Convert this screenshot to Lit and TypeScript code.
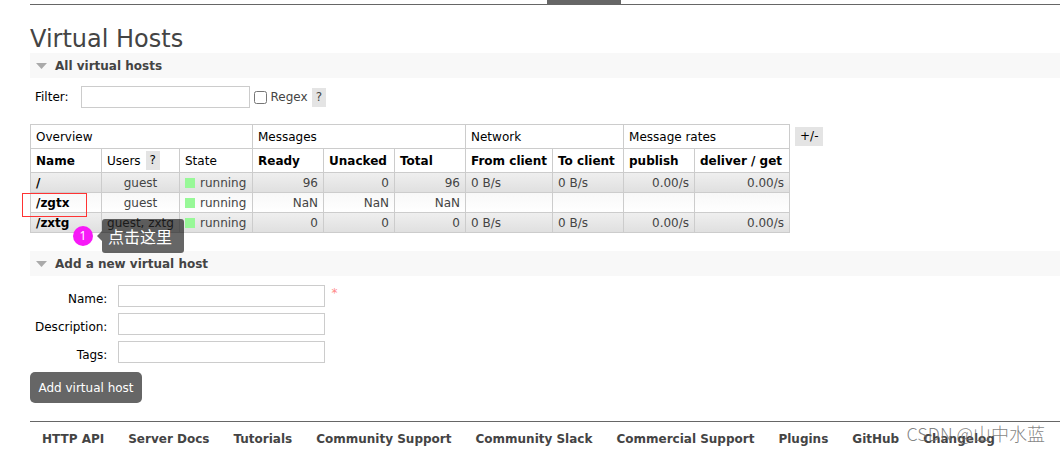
import { LitElement, html, css } from "lit";
import { customElement, state } from "lit/decorators.js";

interface VHost {
  name: string;
  users: string;
  state: string;
  messages: string[];
  network: string[];
  rates: string[];
}

const HOSTS: VHost[] = [
  { name: "/", users: "guest", state: "running", messages: ["96", "0", "96"], network: ["0 B/s", "0 B/s"], rates: ["0.00/s", "0.00/s"] },
  { name: "/zgtx", users: "guest", state: "running", messages: ["NaN", "NaN", "NaN"], network: ["", ""], rates: ["", ""] },
  { name: "/zxtg", users: "guest, zxtg", state: "running", messages: ["0", "0", "0"], network: ["0 B/s", "0 B/s"], rates: ["0.00/s", "0.00/s"] },
];

const LINKS = [
  "HTTP API", "Server Docs", "Tutorials", "Community Support", "Community Slack",
  "Commercial Support", "Plugins", "GitHub", "Changelog",
];

@customElement("app-root")
export class AppRoot extends LitElement {
  @state() private listOpen = true;
  @state() private formOpen = true;

  static styles = css`
    :host {
      display: block;
      position: relative;
      overflow: hidden;
      background: #fff;
      color: #444;
      font: 12px/16px Verdana, "DejaVu Sans", sans-serif;
    }
    * { box-sizing: border-box; }
    .page { padding-left: 30px; }
    .tabs { display: flex; height: 5px; border-bottom: 1px solid #666; }
    .tab-active { width: 74px; margin-left: 517px; background: #666; }
    h1 { margin: 20px 0 0; font-size: 24px; line-height: 28px; font-weight: 400; }
    h2 { margin: 0; font-size: 12px; }
    .toggle {
      display: flex; align-items: center; gap: 8px;
      width: 100%; height: 25px; padding: 0 6px;
      border: 0; background: #f8f8f8; color: #444;
      font: bold 12px/16px Verdana, "DejaVu Sans", sans-serif;
      cursor: pointer;
    }
    .arrow { width: 11px; height: 6px; }
    .filter { display: flex; align-items: center; padding: 8px 5px 16px; color: #000; }
    .filter .text { width: 169px; margin: 0 4px 0 12px; }
    .text { height: 22px; padding: 0 4px; border: 1px solid #ccc; font: inherit; outline: 0; }
    .regex { display: flex; align-items: center; gap: 4px; color: #444; }
    .regex input { width: 13px; height: 13px; margin: 0; }
    .chip {
      display: inline-block; height: 19px; padding: 0 4px;
      border: 0; background: #e4e4e4; color: #444;
      font: inherit; line-height: 19px; cursor: pointer;
    }
    .filter .chip { margin-left: 4px; }
    .head { display: flex; align-items: center; gap: 5px; }
    th .chip { color: #000; }
    .listing { display: flex; align-items: flex-start; gap: 5px; margin-bottom: 18px; }
    .listing > .chip { margin-top: 3px; padding: 0 5px; color: #000; }
    table { border-collapse: collapse; }
    th, td { padding: 0 5px; border: 1px solid #ccc; white-space: nowrap; }
    th { height: 24px; color: #000; font-weight: 400; text-align: left; }
    th.sort { font-weight: 700; }
    td { height: 20px; text-align: right; }
    tbody tr { background: linear-gradient(#efefef, #dfdfdf); }
    tbody tr:nth-child(even) { background: linear-gradient(#f8f8f8, #fff); }
    td.left { text-align: left; }
    td.center { text-align: center; }
    td a { color: #000; font-weight: 700; text-decoration: none; }
    .c-name { width: 71px; }
    .c-users { width: 78px; }
    .c-state { width: 73px; }
    .c-num { width: 71px; }
    .c-from { width: 87px; }
    .c-deliver { width: 95px; }
    .status { display: flex; align-items: center; gap: 5px; }
    .square { width: 10px; height: 10px; background: #98f898; }
    .form { display: grid; grid-template-columns: max-content 207px auto; column-gap: 11px; row-gap: 6px; padding: 9px 5px; color: #000; }
    .form label { padding-top: 6px; text-align: right; }
    .form .text { grid-column: 2; }
    .required { margin-left: -5px; color: #f88; }
    .submit {
      display: block; min-width: 112px; height: 31px; padding: 0 8px; border: 0; border-radius: 5px;
      background: #666; color: #fff; font: inherit; cursor: pointer;
    }
    footer { display: flex; margin-top: 18px; padding: 9px 0 5px; border-top: 1px solid #666; }
    footer a { padding: 0 12px; color: #444; font-weight: 700; text-decoration: none; white-space: nowrap; }
    .mark { position: absolute; top: 193px; left: 22px; width: 65px; height: 24px; border: 1px solid #f33; }
    .step {
      position: absolute; top: 226px; left: 73px; width: 20px; height: 20px;
      border-radius: 50%; background: #f719f7; color: #fff; text-align: center; line-height: 20px;
      font-family: "Noto Sans", sans-serif;
    }
    .tip {
      position: absolute; top: 219px; left: 102px; height: 34px; padding: 0 12px 0 6px;
      border-radius: 3px; background: rgba(0, 0, 0, 0.6); color: #fff;
      font: 16px/34px "Noto Sans CJK SC", sans-serif;
    }
    .tip::before {
      content: ""; position: absolute; top: 12px; left: -5px;
      border: solid transparent; border-width: 5px 5px 5px 0; border-right-color: rgba(0, 0, 0, 0.6);
    }
    .watermark {
      position: absolute; right: 15px; bottom: 6px; color: rgba(110, 110, 110, 0.85);
      font: 300 18px/26px "Noto Sans CJK SC", sans-serif; pointer-events: none;
    }
  `;

  private section(title: string, open: boolean, toggle: () => void) {
    return html`<h2>
      <button class="toggle" aria-expanded=${open} @click=${toggle}>
        <svg class="arrow" viewBox="0 0 11 6"><path d="M0 0H11L5.5 6Z" fill="#aaa" /></svg>${title}
      </button>
    </h2>`;
  }

  private row(h: VHost) {
    return html`<tr>
      <td class="left"><a href="#/vhosts">${h.name}</a></td>
      <td class="center">${h.users}</td>
      <td><div class="status"><span class="square"></span>${h.state}</div></td>
      ${h.messages.map((v) => html`<td>${v}</td>`)}
      ${h.network.map((v) => html`<td class="left">${v}</td>`)}
      ${h.rates.map((v) => html`<td>${v}</td>`)}
    </tr>`;
  }

  private list() {
    return html`
      <div class="filter">
        <label for="filter">Filter:</label>
        <input class="text" id="filter" type="text" />
        <label class="regex"><input type="checkbox" />Regex</label>
        <button class="chip">?</button>
      </div>
      <div class="listing">
        <table>
          <colgroup>
            <col class="c-name" /><col class="c-users" /><col class="c-state" />
            <col class="c-num" /><col class="c-num" /><col class="c-num" />
            <col class="c-from" /><col class="c-num" />
            <col class="c-num" /><col class="c-deliver" />
          </colgroup>
          <thead>
            <tr>
              <th colspan="3">Overview</th>
              <th colspan="3">Messages</th>
              <th colspan="2">Network</th>
              <th colspan="2">Message rates</th>
            </tr>
            <tr>
              <th class="sort">Name</th>
              <th><div class="head">Users <button class="chip">?</button></div></th>
              <th>State</th>
              ${["Ready", "Unacked", "Total", "From client", "To client", "publish", "deliver / get"].map(
                (t) => html`<th class="sort">${t}</th>`
              )}
            </tr>
          </thead>
          <tbody>${HOSTS.map((h) => this.row(h))}</tbody>
        </table>
        <button class="chip">+/-</button>
      </div>
    `;
  }

  private form() {
    return html`<form @submit=${(e: Event) => e.preventDefault()}>
      <div class="form">
        <label for="name">Name:</label>
        <input class="text" id="name" type="text" />
        <span class="required">*</span>
        <label for="description">Description:</label>
        <input class="text" id="description" type="text" />
        <span></span>
        <label for="tags">Tags:</label>
        <input class="text" id="tags" type="text" />
      </div>
      <button class="submit" type="submit">Add virtual host</button>
    </form>`;
  }

  render() {
    return html`
      <div class="page">
        <div class="tabs"><span class="tab-active"></span></div>
        <main>
          <h1>Virtual Hosts</h1>
          ${this.section("All virtual hosts", this.listOpen, () => (this.listOpen = !this.listOpen))}
          ${this.listOpen ? this.list() : ""}
          ${this.section("Add a new virtual host", this.formOpen, () => (this.formOpen = !this.formOpen))}
          ${this.formOpen ? this.form() : ""}
        </main>
        <footer>${LINKS.map((l) => html`<a href="#">${l}</a>`)}</footer>
      </div>
      <div class="mark"></div>
      <div class="step">1</div>
      <div class="tip">点击这里</div>
      <div class="watermark">CSDN @山中水蓝</div>
    `;
  }
}
